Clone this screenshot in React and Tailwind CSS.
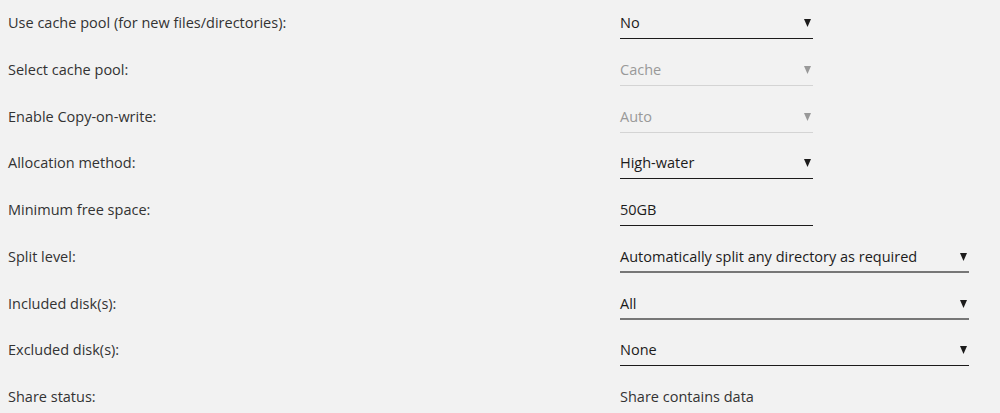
import React from 'react';

const rows = [
  { label: 'Use cache pool (for new files/directories):', value: 'No', type: 'select', width: 'short' },
  { label: 'Select cache pool:', value: 'Cache', type: 'select', width: 'short', disabled: true },
  { label: 'Enable Copy-on-write:', value: 'Auto', type: 'select', width: 'short', disabled: true },
  { label: 'Allocation method:', value: 'High-water', type: 'select', width: 'short' },
  { label: 'Minimum free space:', value: '50GB', type: 'input', width: 'short' },
  { label: 'Split level:', value: 'Automatically split any directory as required', type: 'select', width: 'long', grey: true },
  { label: 'Included disk(s):', value: 'All', type: 'select', width: 'long', grey: true },
  { label: 'Excluded disk(s):', value: 'None', type: 'select', width: 'long' },
  { label: 'Share status:', value: 'Share contains data', type: 'text' },
];

const Arrow = ({ color }) => (
  <svg width="7" height="8" viewBox="0 0 7 8" className="shrink-0">
    <polygon points="0,0 7,0 3.5,8" fill={color} />
  </svg>
);

const Field = ({ row }) => {
  if (row.type === 'text') {
    return <div className="leading-[26px] text-[#333]">{row.value}</div>;
  }
  const widthCls = row.width === 'long' ? 'w-[349px]' : 'w-[193px]';
  const lineCls = row.disabled
    ? 'border-b border-[#d4d4d4]'
    : row.grey
    ? 'border-b-2 border-[#777]'
    : 'border-b border-[#1c1b1b]';
  return (
    <div className={`${widthCls} ${lineCls} h-[29px] flex items-start justify-between pr-[2px]`}>
      <span className={`leading-[26px] ${row.disabled ? 'text-[#999]' : 'text-[#1c1b1b]'}`}>{row.value}</span>
      {row.type === 'select' && (
        <span className="h-[26px] flex items-center">
          <Arrow color={row.disabled ? '#999' : '#1c1b1b'} />
        </span>
      )}
    </div>
  );
};

const App = () => {
  return (
    <div className="w-full h-[413px] overflow-hidden bg-[#f2f2f2] text-[14.5px] text-[#333]" style={{ fontFamily: '"Open Sans", "Noto Sans", sans-serif' }}>
      {rows.map((row) => (
        <div key={row.label} className="flex h-[46.75px] pt-[10px]">
          <div className="w-[620px] pl-2 leading-[26px]">{row.label}</div>
          <Field row={row} />
        </div>
      ))}
    </div>
  );
};

export default App;
